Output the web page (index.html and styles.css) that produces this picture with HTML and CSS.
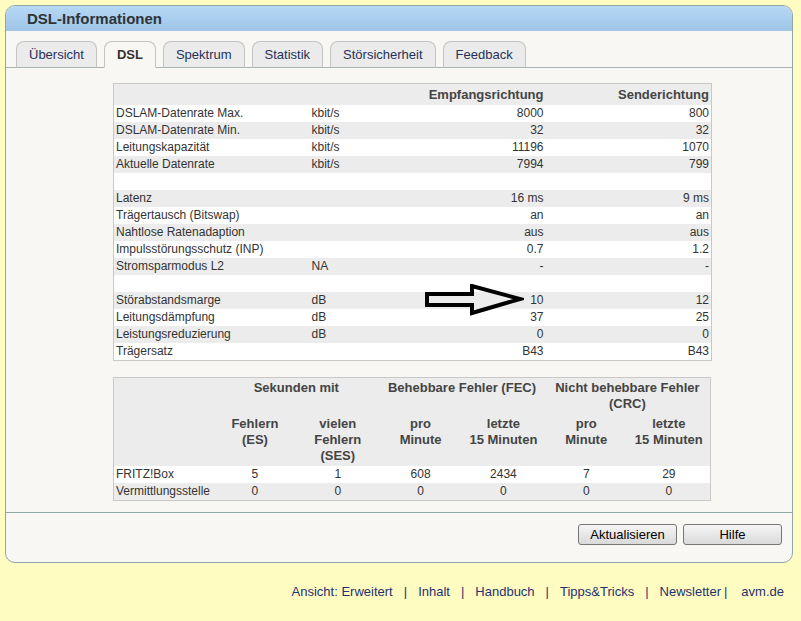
FILE: index.html
```html
<!DOCTYPE html>
<html lang="de">
<head>
  <meta charset="UTF-8">
  <title>DSL-Informationen</title>
  <link rel="stylesheet" href="styles.css">
</head>
<body>
  <div class="panel">
    <div class="panel-head">DSL-Informationen</div>
    <div class="tabs">
      <span class="tab">Übersicht</span>
      <span class="tab active">DSL</span>
      <span class="tab">Spektrum</span>
      <span class="tab">Statistik</span>
      <span class="tab">Störsicherheit</span>
      <span class="tab">Feedback</span>
    </div>
    <div class="content">
      <div class="table-wrap">
        <table class="dsl-table">
          <colgroup>
            <col class="c-label"><col class="c-unit"><col class="c-val"><col class="c-val2">
          </colgroup>
          <thead>
            <tr><th></th><th></th><th class="num">Empfangsrichtung</th><th class="num">Senderichtung</th></tr>
          </thead>
          <tbody>
            <tr><td>DSLAM-Datenrate Max.</td><td>kbit/s</td><td class="num">8000</td><td class="num">800</td></tr>
            <tr><td>DSLAM-Datenrate Min.</td><td>kbit/s</td><td class="num">32</td><td class="num">32</td></tr>
            <tr><td>Leitungskapazität</td><td>kbit/s</td><td class="num">11196</td><td class="num">1070</td></tr>
            <tr><td>Aktuelle Datenrate</td><td>kbit/s</td><td class="num">7994</td><td class="num">799</td></tr>
            <tr><td>&nbsp;</td><td></td><td></td><td></td></tr>
            <tr><td>Latenz</td><td></td><td class="num">16 ms</td><td class="num">9 ms</td></tr>
            <tr><td>Trägertausch (Bitswap)</td><td></td><td class="num">an</td><td class="num">an</td></tr>
            <tr><td>Nahtlose Ratenadaption</td><td></td><td class="num">aus</td><td class="num">aus</td></tr>
            <tr><td>Impulsstörungsschutz (INP)</td><td></td><td class="num">0.7</td><td class="num">1.2</td></tr>
            <tr><td>Stromsparmodus L2</td><td>NA</td><td class="num">-</td><td class="num">-</td></tr>
            <tr><td>&nbsp;</td><td></td><td></td><td></td></tr>
            <tr><td>Störabstandsmarge</td><td>dB</td><td class="num">10</td><td class="num">12</td></tr>
            <tr><td>Leitungsdämpfung</td><td>dB</td><td class="num">37</td><td class="num">25</td></tr>
            <tr><td>Leistungsreduzierung</td><td>dB</td><td class="num">0</td><td class="num">0</td></tr>
            <tr><td>Trägersatz</td><td></td><td class="num">B43</td><td class="num">B43</td></tr>
          </tbody>
        </table>
        <svg class="arrow" width="100" height="34" viewBox="0 0 100 34">
          <polygon points="3,10 48,10 48,2 96,15 48,29 48,21 3,21" fill="none" stroke="#000" stroke-width="4" stroke-linejoin="miter"/>
        </svg>
      </div>

      <table class="err-table">
        <colgroup>
          <col class="e-label"><col><col><col><col><col><col>
        </colgroup>
        <thead>
          <tr class="head1">
            <th rowspan="2"></th>
            <th colspan="2">Sekunden mit</th>
            <th colspan="2">Behebbare Fehler (FEC)</th>
            <th colspan="2">Nicht behebbare Fehler<br>(CRC)</th>
          </tr>
          <tr class="head2">
            <th>Fehlern<br>(ES)</th>
            <th>vielen<br>Fehlern<br>(SES)</th>
            <th>pro<br>Minute</th>
            <th>letzte<br>15 Minuten</th>
            <th>pro<br>Minute</th>
            <th>letzte<br>15 Minuten</th>
          </tr>
        </thead>
        <tbody>
          <tr><td>FRITZ!Box</td><td>5</td><td>1</td><td>608</td><td>2434</td><td>7</td><td>29</td></tr>
          <tr><td>Vermittlungsstelle</td><td>0</td><td>0</td><td>0</td><td>0</td><td>0</td><td>0</td></tr>
        </tbody>
      </table>
    </div>
    <div class="actions">
      <button class="btn">Aktualisieren</button>
      <button class="btn">Hilfe</button>
    </div>
  </div>

  <div class="footer">
    <a href="#">Ansicht: Erweitert</a><span class="sep">|</span><a href="#">Inhalt</a><span class="sep">|</span><a href="#">Handbuch</a><span class="sep">|</span><a href="#">Tipps&amp;Tricks</a><span class="sep">|</span><a href="#">Newsletter</a><span class="sep tight">|</span><a href="#">avm.de</a>
  </div>
</body>
</html>
```

FILE: styles.css
```css
body {
  margin: 0;
  padding: 5px 8px 0 5px;
  background: #fffcc2;
  font-family: "Liberation Sans", Arial, sans-serif;
  color: #333;
}
.panel {
  border: 1px solid #8fa7a7;
  border-radius: 10px;
  background: #f8f7f3;
  overflow: hidden;
}
.panel-head {
  height: 25px;
  line-height: 26px;
  padding-left: 21px;
  background: linear-gradient(#b6d8f6, #9fc4e6);
  font-size: 15px;
  font-weight: bold;
  color: #2e3338;
}
.tabs {
  display: flex;
  gap: 7px;
  padding: 10px 0 0 10px;
  border-bottom: 1px solid #a9b5b5;
}
.tab {
  margin-bottom: -1px;
  padding: 0 12px;
  line-height: 25px;
  font-size: 13px;
  color: #26315a;
  background: #ebebeb;
  border: 1px solid #c3c3c3;
  border-bottom-color: #a9b5b5;
  border-radius: 8px 8px 0 0;
}
.tab.active {
  background: #f8f7f3;
  border-bottom-color: #f8f7f3;
  font-weight: bold;
  color: #333;
}
.content {
  padding: 15px 0 11px 107px;
}
.table-wrap {
  position: relative;
  width: 598px;
}
table {
  border-collapse: collapse;
  table-layout: fixed;
  width: 598px;
  border: 1px solid #c8c8c8;
  font-size: 12px;
}
td, th {
  padding: 0 2px;
  white-space: nowrap;
}
.dsl-table th {
  height: 21px;
  line-height: 21px;
  font-size: 13px;
  background: #ececec;
  color: #444;
}
.dsl-table td {
  height: 17px;
  line-height: 17px;
  background: #fff;
}
.dsl-table tbody tr:nth-child(even) td {
  background: #ececec;
}
.c-label { width: 196px; }
.c-unit { width: 72px; }
.c-val { width: 164px; }
.c-val2 { width: 166px; }
.num {
  text-align: right;
}
.arrow {
  position: absolute;
  left: 311px;
  top: 201px;
}
.err-table {
  margin-top: 16px;
}
.e-label { width: 100px; }
.err-table th {
  background: #ececec;
  font-size: 13px;
  line-height: 16px;
  color: #444;
  text-align: center;
  vertical-align: top;
  padding: 2px;
}
.err-table td {
  height: 17px;
  line-height: 17px;
  text-align: center;
  background: #ececec;
}
.err-table td:first-child {
  text-align: left;
}
.err-table tbody tr:first-child td {
  background: #fff;
}
.actions {
  display: flex;
  justify-content: flex-end;
  gap: 6px;
  padding: 11px 10px 17px 0;
  border-top: 1px solid #8fa7a7;
}
.btn {
  width: 99px;
  height: 21px;
  padding: 0;
  font-family: "Liberation Sans", Arial, sans-serif;
  font-size: 13px;
  color: #000;
  background: linear-gradient(#f6f6f6, #d9d9d9);
  border: 1px solid #777;
  border-radius: 3px;
}
.footer {
  margin-top: 21px;
  padding-right: 9px;
  text-align: right;
  font-size: 13px;
  line-height: 16px;
}
.footer a {
  color: #1f3170;
  text-decoration: none;
}
.sep {
  color: #1f3170;
  margin: 0 11px;
}
.sep.tight {
  margin: 0 14px 0 3px;
}
```
